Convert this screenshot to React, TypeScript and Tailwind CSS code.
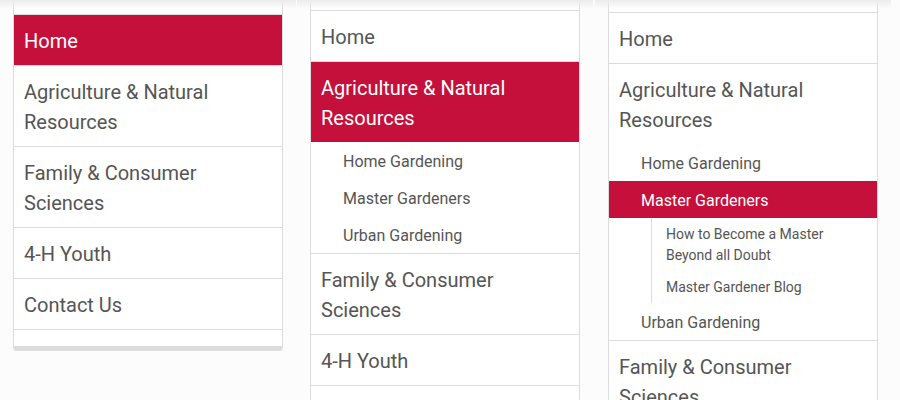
const RED = "bg-[#c4103a] text-white";

type Sub = { label: string; active?: boolean; children?: string[] };

const TopItem = ({ label, active }: { label: string; active?: boolean }) => (
  <div
    className={`border-b border-[#dcdcdc] px-[10px] pt-[11px] pb-[9px] text-[20px] leading-[30px] ${
      active ? RED : "text-[#555]"
    }`}
  >
    {label}
  </div>
);

const SubList = ({ items }: { items: Sub[] }) => (
  <div className="border-b border-[#dcdcdc]">
    {items.map((s) => (
      <div key={s.label}>
        <div
          className={`pl-[32px] pt-[2px] text-[16px] leading-[35px] ${
            s.active ? RED : "text-[#555]"
          }`}
        >
          {s.label}
        </div>
        {s.children && (
          <div className="ml-[42px] border-l border-[#dcdcdc]">
            {s.children.map((c) => (
              <div
                key={c}
                className="py-[5.5px] pl-[14px] pr-[40px] text-[14px] leading-[21px] text-[#555]"
              >
                {c}
              </div>
            ))}
          </div>
        )}
      </div>
    ))}
  </div>
);

const Panel = ({
  top,
  className = "",
  children,
  footer,
}: {
  top: string;
  className?: string;
  children: React.ReactNode;
  footer?: boolean;
}) => (
  <div className={`relative w-[270px] shrink-0 ${className}`}>
    <div
      className={`border-x border-[#dcdcdc] bg-white ${
        footer ? "rounded-b-[4px] border-b-[5px] border-b-[#dcdcdc]" : ""
      }`}
    >
      <div className={`${top} border-b border-[#dcdcdc]`} />
      {children}
      {footer && <div className="h-[16px]" />}
    </div>
    {/* header shadow */}
    <div className="pointer-events-none absolute -left-[13px] -right-[13px] top-0 h-[9px] bg-gradient-to-b from-[#ececec] to-transparent" />
  </div>
);

export default function App() {
  return (
    <div
      className="flex h-[400px] w-[900px] items-start overflow-hidden bg-[#fcfcfc] pl-[13px]"
      style={{ fontFamily: "Roboto, 'Noto Sans', sans-serif" }}
    >
      <Panel top="h-[15px]" footer>
        <TopItem label="Home" active />
        <TopItem label="Agriculture & Natural Resources" />
        <TopItem label="Family & Consumer Sciences" />
        <TopItem label="4-H Youth" />
        <TopItem label="Contact Us" />
      </Panel>

      <Panel top="h-[11px]" className="ml-[27px]">
        <TopItem label="Home" />
        <div className={`px-[10px] pt-[11px] pb-[9px] text-[20px] leading-[30px] ${RED}`}>
          Agriculture &amp; Natural Resources
        </div>
        <SubList
          items={[
            { label: "Home Gardening" },
            { label: "Master Gardeners" },
            { label: "Urban Gardening" },
          ]}
        />
        <TopItem label="Family & Consumer Sciences" />
        <TopItem label="4-H Youth" />
        <TopItem label="Contact Us" />
      </Panel>

      <Panel top="h-[13px]" className="ml-[28px]">
        <TopItem label="Home" />
        <div className="px-[10px] pt-[11px] pb-[9px] text-[20px] leading-[30px] text-[#555]">
          Agriculture &amp; Natural Resources
        </div>
        <SubList
          items={[
            { label: "Home Gardening" },
            {
              label: "Master Gardeners",
              active: true,
              children: [
                "How to Become a Master Beyond all Doubt",
                "Master Gardener Blog",
              ],
            },
            { label: "Urban Gardening" },
          ]}
        />
        <TopItem label="Family & Consumer Sciences" />
        <TopItem label="4-H Youth" />
      </Panel>
    </div>
  );
}
